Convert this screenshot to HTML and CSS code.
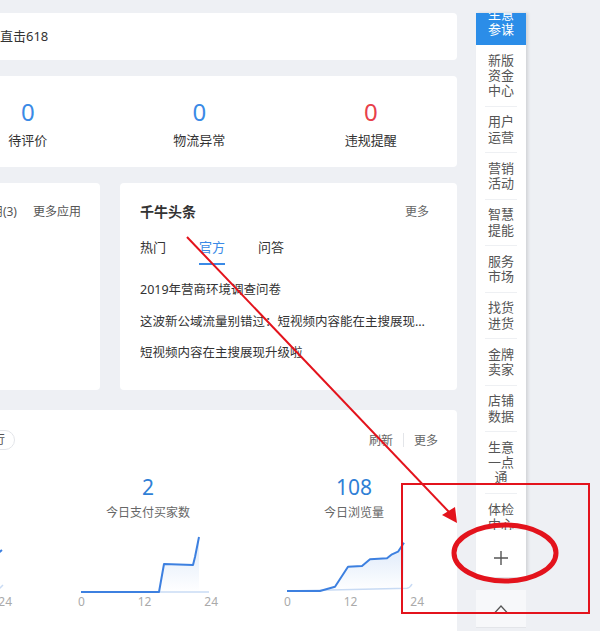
FILE: index.html
```html
<!DOCTYPE html>
<html lang="zh-CN">
<head>
    <meta charset="UTF-8">
    <meta name="viewport" content="width=device-width, initial-scale=1.0">
    <title>千牛工作台</title>
    <link rel="stylesheet" href="styles.css">
</head>
<body>
    <div class="page">
        <main class="main">
            <!-- Promo strip -->
            <section class="card promo">
                <span>直击618</span>
            </section>

            <!-- Todo counters -->
            <section class="card todo">
                <div class="todo-row">
                    <div class="todo-item"><b class="num">0</b><span>待评价</span></div>
                    <div class="todo-item"><b class="num">0</b><span>物流异常</span></div>
                    <div class="todo-item"><b class="num red">0</b><span>违规提醒</span></div>
                </div>
            </section>

            <div class="card-row">
                <section class="card apps">
                    <div class="apps-head">
                        <span>常用应用(3)</span><i class="sep"></i><a href="#">更多应用</a>
                    </div>
                </section>

                <section class="card news">
                    <div class="news-head">
                        <h3>千牛头条</h3>
                        <a href="#">更多</a>
                    </div>
                    <div class="tabs">
                        <span class="tab">热门</span>
                        <span class="tab active">官方</span>
                        <span class="tab">问答</span>
                    </div>
                    <ul class="news-list">
                        <li>2019年营商环境调查问卷</li>
                        <li>这波新公域流量别错过：短视频内容能在主搜展现位置获得更多曝光</li>
                        <li>短视频内容在主搜展现升级啦</li>
                    </ul>
                </section>
            </div>

            <!-- Realtime stats -->
            <section class="card stats">
                <div class="stats-head">
                    <span class="pill">排行</span>
                    <div class="links">
                        <a href="#">刷新</a><i class="sep"></i><a href="#">更多</a>
                    </div>
                </div>
                <div class="stats-row">
                    <div class="stat">
                        <b class="num">1,286</b>
                        <span class="label">今日支付金额</span>
                        <div class="chart">
                            <svg viewBox="0 0 140 64" width="140" height="64">
                                <polyline class="cmp" points="3,62 118,61 126,60 131,55"/>
                                <polyline class="line" points="3,62 60,62 70,50 100,44 130,20"/>
                            </svg>
                            <div class="axis"><span>0</span><span>12</span><span>24</span></div>
                        </div>
                    </div>
                    <div class="stat">
                        <b class="num">2</b>
                        <span class="label">今日支付买家数</span>
                        <div class="chart">
                            <svg viewBox="0 0 140 64" width="140" height="64">
                                <defs>
                                    <linearGradient id="fill1" x1="0" y1="0" x2="0" y2="1">
                                        <stop offset="0" stop-color="#3d82e0" stop-opacity="0.18"/>
                                        <stop offset="1" stop-color="#3d82e0" stop-opacity="0"/>
                                    </linearGradient>
                                </defs>
                                <line class="cmp" x1="3" y1="62" x2="131" y2="62"/>
                                <polygon fill="url(#fill1)" points="3,62 81,62 86,34 115,35 117,27 121,7 121,62"/>
                                <polyline class="line" points="3,62 81,62 86,34 115,35 117,27 121,7"/>
                            </svg>
                            <div class="axis"><span>0</span><span>12</span><span>24</span></div>
                        </div>
                    </div>
                    <div class="stat">
                        <b class="num">108</b>
                        <span class="label">今日浏览量</span>
                        <div class="chart">
                            <svg viewBox="0 0 140 64" width="140" height="64">
                                <defs>
                                    <linearGradient id="fill2" x1="0" y1="0" x2="0" y2="1">
                                        <stop offset="0" stop-color="#3d82e0" stop-opacity="0.18"/>
                                        <stop offset="1" stop-color="#3d82e0" stop-opacity="0"/>
                                    </linearGradient>
                                </defs>
                                <path class="cmp" d="M3 61 L123 58.3 Q126 58 128 54"/>
                                <polygon fill="url(#fill2)" points="3,61 36,61 43,59 51,56.7 64,36.7 78,36 86,29.3 103,28.3 108,24.3 114,21.7 120,12.7 120,61"/>
                                <polyline class="line" points="3,61 36,61 43,59 51,56.7 64,36.7 78,36 86,29.3 103,28.3 108,24.3 114,21.7 120,12.7"/>
                            </svg>
                            <div class="axis"><span>0</span><span>12</span><span>24</span></div>
                        </div>
                    </div>
                </div>
            </section>
        </main>

        <aside class="side">
            <div class="side-scroll">
                <div class="side-list">
                    <div class="side-item active">生意<br>参谋</div>
                    <div class="side-item">新版<br>资金<br>中心</div>
                    <div class="side-item">用户<br>运营</div>
                    <div class="side-item">营销<br>活动</div>
                    <div class="side-item">智慧<br>提能</div>
                    <div class="side-item">服务<br>市场</div>
                    <div class="side-item">找货<br>进货</div>
                    <div class="side-item">金牌<br>卖家</div>
                    <div class="side-item">店铺<br>数据</div>
                    <div class="side-item">生意<br>一点<br>通</div>
                    <div class="side-item">体检<br>中心</div>
                </div>
            </div>
            <div class="side-add">
                <svg width="16" height="16" viewBox="0 0 16 16">
                    <path d="M8 1 V15 M1 8 H15" stroke="#555" stroke-width="1.4" fill="none"/>
                </svg>
            </div>
            <div class="side-up">
                <svg width="14" height="8" viewBox="0 0 14 8">
                    <path d="M1 7.5 L7 1 L13 7.5" stroke="#555" stroke-width="1.2" fill="none"/>
                </svg>
            </div>
        </aside>
    </div>

    <!-- red annotation drawn over the screenshot -->
    <svg class="mark" viewBox="0 0 600 631" width="600" height="631">
        <line x1="187" y1="237" x2="449" y2="512" stroke="#e3131c" stroke-width="2"/>
        <polygon points="457,523 442,515 455,507" fill="#e3131c"/>
        <rect x="402" y="484" width="187" height="129" fill="none" stroke="#e3131c" stroke-width="2"/>
        <ellipse cx="505" cy="553" rx="51" ry="28" fill="none" stroke="#e3131c" stroke-width="5"/>
    </svg>
</body>
</html>
```

FILE: styles.css
```css
* {
    box-sizing: border-box;
}

body {
    margin: 0;
    height: 631px;
    overflow: hidden;
    background-color: #eef0f4;
    font-family: "Noto Sans", "Noto Sans CJK SC", sans-serif;
    font-size: 12px;
    color: #333;
}

a {
    color: inherit;
    text-decoration: none;
}

.page {
    display: flex;
    align-items: flex-start;
    padding-top: 13px;
}

.main {
    width: 457px;
    flex-shrink: 0;
    margin-right: 19px;
}

/* Cards */
.card {
    background: #fff;
    border-radius: 0 4px 4px 0;
    overflow: hidden;
}

.promo {
    height: 47px;
    line-height: 47px;
    font-size: 13px;
}

.todo {
    margin-top: 16px;
    height: 91px;
    padding-top: 22px;
}

.todo-row {
    display: flex;
    margin-left: -58px;
}

.todo-item {
    width: 171.5px;
    flex-shrink: 0;
    text-align: center;
}

.todo-item .num {
    display: block;
    font-size: 24px;
    line-height: 28px;
    font-weight: 400;
    color: #3a8ae6;
}

.todo-item .num.red {
    color: #e8404a;
}

.todo-item span {
    display: block;
    margin-top: 5px;
    font-size: 13px;
    line-height: 18px;
}

.card-row {
    display: flex;
    gap: 20px;
    margin-top: 16px;
    height: 207px;
}

.apps {
    width: 100px;
    flex-shrink: 0;
    padding: 20px 19px 20px 0;
}

.apps-head {
    display: flex;
    justify-content: flex-end;
    align-items: center;
    white-space: nowrap;
    line-height: 18px;
    color: #555;
}

.sep {
    display: inline-block;
    width: 1px;
    height: 13px;
    margin: 0 8px;
    background: #888;
}

/* News */
.news {
    flex: 1;
    border-radius: 4px;
    padding: 20px 22px 20px 20px;
}

.news-head {
    display: flex;
    justify-content: space-between;
    align-items: center;
    line-height: 18px;
}

.news-head h3 {
    margin: 0;
    font-size: 14px;
    font-weight: 600;
    color: #333;
}

.news-head a {
    margin-right: 6px;
    color: #666;
}

.tabs {
    display: flex;
    gap: 33px;
    margin-top: 16px;
    font-size: 13px;
    line-height: 20px;
}

.tab {
    padding-bottom: 6px;
    border-bottom: 2px solid transparent;
}

.tab.active {
    color: #3a8ae6;
    border-bottom-color: #3a8ae6;
}

.news-list {
    list-style: none;
    margin: 9px 0 0;
    padding: 0;
    font-size: 12.5px;
}

.news-list li {
    line-height: 31.5px;
    white-space: nowrap;
    overflow: hidden;
    text-overflow: ellipsis;
}

/* Stats */
.stats {
    margin-top: 20px;
    height: 230px;
    padding: 20px 19px 0 20px;
    border-radius: 0 4px 0 0;
}

.stats-head {
    display: flex;
    justify-content: space-between;
    align-items: center;
    height: 20px;
}

.pill {
    margin-left: -49px;
    padding: 0 9px;
    border: 1px solid #e3e5e9;
    border-radius: 10px;
    line-height: 18px;
    color: #555;
}

.links {
    display: flex;
    align-items: center;
    color: #666;
}

.links .sep {
    height: 14px;
    margin: 0 10px;
    background: #e3e5e9;
}

.stats-row {
    display: flex;
    margin-top: 25px;
    margin-left: -181px;
}

.stat {
    width: 206px;
    flex-shrink: 0;
    text-align: center;
}

.stat .num {
    display: block;
    font-size: 21px;
    line-height: 24px;
    font-weight: 400;
    color: #2f7fd6;
}

.stat .label {
    display: block;
    margin-top: 5px;
    line-height: 18px;
    color: #666;
}

.chart {
    width: 140px;
    margin: 8px auto 0;
}

.chart svg {
    display: block;
    overflow: visible;
}

.chart .line {
    fill: none;
    stroke: #3d80e0;
    stroke-width: 2;
    stroke-linejoin: round;
}

.chart .cmp {
    fill: none;
    stroke: #c9dbf4;
    stroke-width: 1.5;
}

.axis {
    display: flex;
    justify-content: space-between;
    line-height: 16px;
    font-size: 12px;
    color: #aaa;
}

/* Right sidebar */
.side {
    width: 50px;
    flex-shrink: 0;
}

.side-scroll {
    height: 517px;
    overflow: hidden;
    background: #fff;
    box-shadow: 2px 0 3px rgba(0, 0, 0, 0.12);
}

.side-list {
    margin-top: -14.5px;
}

.side-item {
    margin: 0 9px;
    padding: 7.5px 0;
    border-bottom: 1px solid #eef0f3;
    text-align: center;
    font-size: 13px;
    line-height: 15.25px;
    color: #555;
}

.side-item.active {
    margin: 0;
    padding: 8px 0;
    border-bottom: 0;
    background: #2b8de8;
    color: #fff;
}

.side-add {
    display: flex;
    justify-content: center;
    align-items: center;
    height: 47px;
    padding-top: 8px;
    background: #fff;
    box-shadow: 2px 0 3px rgba(0, 0, 0, 0.12);
}

.side-add svg,
.side-up svg {
    display: block;
}

.side-up {
    display: flex;
    justify-content: center;
    align-items: center;
    height: 38px;
    margin-top: 13px;
    background: #f7f8fa;
    border-bottom: 1px solid #e3e5e9;
}

/* Annotation overlay */
.mark {
    position: absolute;
    left: 0;
    top: 0;
    pointer-events: none;
}
```
